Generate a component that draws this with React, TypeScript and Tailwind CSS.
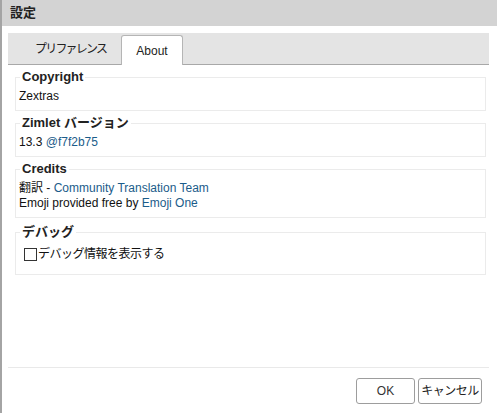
const Section = (props: { title: string; children: React.ReactNode; className?: string }) => {
  return (
    <fieldset className={"mx-[7px] mr-[5px] border border-[#ebebeb] px-[3px] pb-[6px] " + (props.className || "")}>
      <legend className="ml-[1px] px-[2px] text-[13px] font-bold leading-[14px] text-[#222]">{props.title}</legend>
      {props.children}
    </fieldset>
  )
}

const Link = (props: { children: React.ReactNode }) => (
  <span className="text-[#1b5c8a]">{props.children}</span>
)

function App() {
  return (
    <div
      className="flex h-[413px] w-[497px] flex-col overflow-hidden border-l-2 border-[#a4a4a4] bg-white text-[12px] text-[#111]"
      style={{ fontFamily: '"Liberation Sans", "Noto Sans CJK JP", sans-serif' }}
    >
      <div className="flex h-[26px] shrink-0 items-center bg-[#d3d3d3] pl-[8px] text-[13px] font-bold text-[#222]">設定</div>

      <div className="flex flex-1 flex-col px-[6px] pt-[7px]">
        <div className="flex h-[32px] w-[481px] items-end border-b border-[#a8a8a8] bg-[#e4e4e4]">
          <div className="flex h-[30px] w-[113px] items-center pl-[27px] tracking-[-1.8px] text-[#222]">プリファレンス</div>
          <div className="-mb-px flex h-[30px] w-[62px] items-center justify-center rounded-t-[3px] border border-b-0 border-[#b5b5b5] bg-white text-[#222]">
            About
          </div>
        </div>

        <div className="mt-[5px] flex flex-col gap-[5px]">
          <Section title="Copyright">
            <div className="mt-[5px] leading-[15px]">Zextras</div>
          </Section>
          <Section title="Zimlet バージョン">
            <div className="mt-[5px] leading-[15px]">
              13.3 <Link>@f7f2b75</Link>
            </div>
          </Section>
          <Section title="Credits">
            <div className="mt-[5px] leading-[15px]">
              翻訳 - <Link>Community Translation Team</Link>
            </div>
            <div className="leading-[15px]">
              Emoji provided free by <Link>Emoji One</Link>
            </div>
          </Section>
          <Section title="デバッグ" className="mt-[2px] pb-[12px]">
            <label className="mt-[8px] flex items-center gap-[1px] leading-[15px]">
              <span className="ml-[5px] inline-block h-[13px] w-[13px] border border-[#333] bg-white"></span>
              <span className="tracking-[-0.5px]">デバッグ情報を表示する</span>
            </label>
          </Section>
        </div>

        <div className="flex-1"></div>

        <div className="w-[481px] border-t border-[#e9e9e9]"></div>
        <div className="flex justify-end gap-[3px] pr-[9px] pt-[10px] pb-[9px]">
          <button className="h-[26px] w-[59px] rounded-[3px] border border-[#9d9d9d] bg-white text-[12px] text-[#333]">OK</button>
          <button className="h-[26px] w-[64px] rounded-[3px] border border-[#9d9d9d] bg-white text-[12px] tracking-[-0.5px] text-[#222]">キャンセル</button>
        </div>
      </div>
    </div>
  )
}

export default App
